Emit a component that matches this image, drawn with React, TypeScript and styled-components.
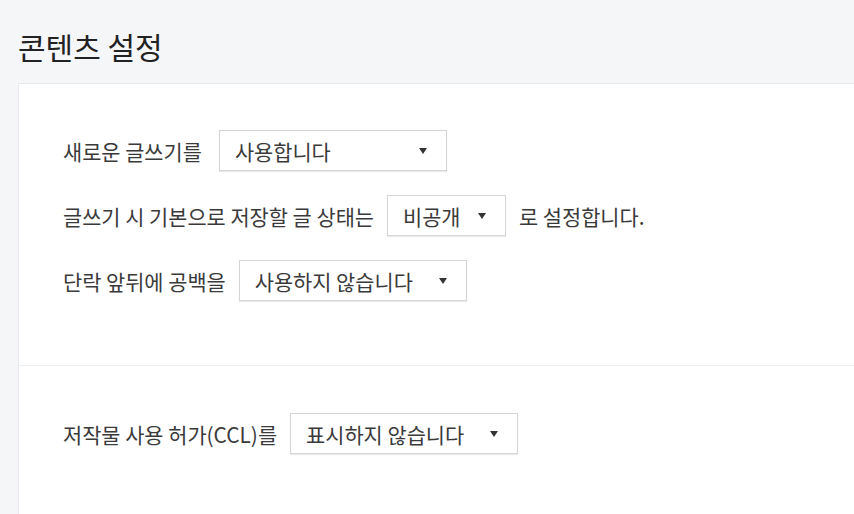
import React from "react";
import styled, { createGlobalStyle } from "styled-components";

const Global = createGlobalStyle`
  html, body { margin: 0; padding: 0; background: #f5f6f8; }
  body { font-family: "Noto Sans CJK KR", "Noto Sans", sans-serif; color: #333; }
`;

const Page = styled.div`
  padding: 24px 0 0 18px;
  height: 514px;
  box-sizing: border-box;
  overflow: hidden;
`;

const Title = styled.h1`
  margin: 0 0 15px 0;
  font-size: 30px;
  font-weight: 400;
  line-height: 44px;
  color: #222;
`;

const Panel = styled.div`
  background: #fff;
  border: 1px solid #e6e8ec;
  border-right: none;
`;

const Section = styled.div<{ $pt: number; $pb: number; $divider?: boolean }>`
  display: flex;
  flex-direction: column;
  gap: 24px;
  padding: ${(p) => p.$pt}px 0 ${(p) => p.$pb}px 44px;
  border-top: ${(p) => (p.$divider ? "1px solid #eeeff1" : "none")};
`;

const Row = styled.div`
  display: flex;
  align-items: center;
  gap: 13px;
  height: 41px;
  font-size: 20.85px;
  font-weight: 400;
  color: #3a3a3a;
`;

const Label = styled.span<{ $extra?: number }>`
  margin-right: ${(p) => p.$extra ?? 0}px;
  white-space: nowrap;
`;

const Select = styled.div<{ $w: number }>`
  width: ${(p) => p.$w}px;
  height: 41px;
  box-sizing: border-box;
  border: 1px solid #d3d5d9;
  box-shadow: 0 1px 1px rgba(0, 0, 0, 0.08);
  background: #fff;
  display: flex;
  align-items: center;
  justify-content: space-between;
  padding: 0 19px 0 15px;
  font-size: 20.85px;
  color: #3a3a3a;
  white-space: nowrap;
`;

const Arrow = styled.span`
  width: 0;
  height: 0;
  border-left: 4.5px solid transparent;
  border-right: 4.5px solid transparent;
  border-top: 6px solid #333;
`;

const Dropdown = ({ w, text }: { w: number; text: string }) => (
  <Select $w={w}>
    <span>{text}</span>
    <Arrow />
  </Select>
);

export default function App() {
  return (
    <>
      <Global />
      <Page>
        <Title>콘텐츠 설정</Title>
        <Panel>
          <Section $pt={46} $pb={64}>
            <Row>
              <Label $extra={4}>새로운 글쓰기를</Label>
              <Dropdown w={228} text="사용합니다" />
            </Row>
            <Row>
              <Label>글쓰기 시 기본으로 저장할 글 상태는</Label>
              <Dropdown w={119} text="비공개" />
              <Label>로 설정합니다.</Label>
            </Row>
            <Row>
              <Label>단락 앞뒤에 공백을</Label>
              <Dropdown w={228} text="사용하지 않습니다" />
            </Row>
          </Section>
          <Section $pt={47} $pb={80} $divider>
            <Row>
              <Label>저작물 사용 허가(CCL)를</Label>
              <Dropdown w={228} text="표시하지 않습니다" />
            </Row>
          </Section>
        </Panel>
      </Page>
    </>
  );
}
